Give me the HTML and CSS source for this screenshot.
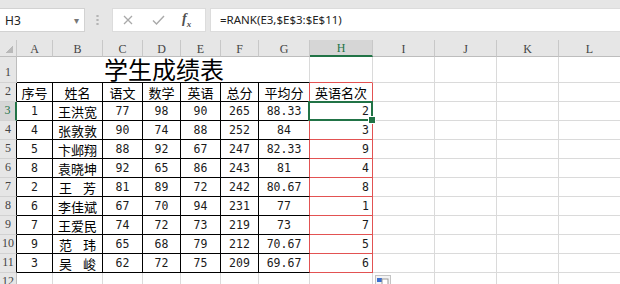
FILE: index.html
```html
<!DOCTYPE html>
<html lang="zh-CN">
<head>
    <meta charset="UTF-8" />
    <title>学生成绩表</title>
    <link rel="stylesheet" href="styles.css">
</head>
<body>
    <div class="toolbar">
        <div class="namebox"><span>H3</span><span class="drop">▾</span></div>
        <div class="grip"></div>
        <div class="fx-btns">
            <svg class="btn-x" width="10" height="10" viewBox="0 0 10 10"><path d="M1 1 L9 9 M9 1 L1 9" stroke="#a9a9a9" stroke-width="1.3" fill="none"/></svg>
            <svg class="btn-ok" width="13" height="10" viewBox="0 0 13 10"><path d="M1 5.5 L4.5 9 L12 1" stroke="#a9a9a9" stroke-width="1.4" fill="none"/></svg>
            <span class="fx"><i>f</i><sub>x</sub></span>
        </div>
        <div class="formula">=RANK(E3,$E$3:$E$11)</div>
    </div>
    <div class="sheet-wrap">
        <div class="sheet" id="sheet"></div>
        <div class="paste-opt">
            <svg width="14" height="8" viewBox="0 0 14 8"><rect x="1" y="1" width="5" height="4" fill="#3b6fd0"/><rect x="6" y="2" width="6" height="6" fill="#fff" stroke="#9a9a9a" stroke-width="1"/></svg>
        </div>
    </div>

    <script>
        const sheet = document.getElementById('sheet');
        const letters = ['A', 'B', 'C', 'D', 'E', 'F', 'G', 'H', 'I', 'J', 'K', 'L'];
        const heads = ['序号', '姓名', '语文', '数学', '英语', '总分', '平均分', '英语名次'];
        const rows = [
            ['1', '王洪宽', '77', '98', '90', '265', '88.33', '2'],
            ['4', '张敦敦', '90', '74', '88', '252', '84', '3'],
            ['5', '卞邺翔', '88', '92', '67', '247', '82.33', '9'],
            ['8', '袁晓坤', '92', '65', '86', '243', '81', '4'],
            ['2', '王 芳', '81', '89', '72', '242', '80.67', '8'],
            ['6', '李佳斌', '67', '70', '94', '231', '77', '1'],
            ['7', '王爱民', '74', '72', '73', '219', '73', '7'],
            ['9', '范 玮', '65', '68', '79', '212', '70.67', '5'],
            ['3', '吴 峻', '62', '72', '75', '209', '69.67', '6']
        ];

        function cell(cls, text) {
            const d = document.createElement('div');
            d.className = 'cell ' + cls;
            if (text) d.textContent = text;
            sheet.appendChild(d);
            return d;
        }

        function blanks(n) {
            for (let i = 0; i < n; i++) cell('');
        }

        // column headers
        cell('corner');
        letters.forEach(l => cell('ch' + (l === 'H' ? ' on' : ''), l));

        // row 1: merged title
        cell('rh', '1');
        cell('title', '学生成绩表');
        cell('rk-top');
        blanks(4);

        // row 2: table heads
        cell('rh tl', '2');
        heads.forEach((h, i) => {
            cell(i < 7 ? 'tb' + (i === 6 ? ' gr' : '') : 'rk head', h);
        });
        blanks(4);

        // rows 3-11: data
        rows.forEach((r, n) => {
            cell('rh tl' + (n === 0 ? ' on' : ''), String(n + 3));
            r.forEach((v, i) => {
                if (i === 7) {
                    cell('rk num' + (n === 0 ? ' sel' : ''), v);
                } else if (i === 1) {
                    const c = cell('tb' + (v.includes(' ') ? ' nm' : ''));
                    v.split(' ').forEach(part => {
                        const s = document.createElement('span');
                        s.textContent = part;
                        c.appendChild(s);
                    });
                } else {
                    cell('tb num' + (i === 6 ? ' gr' : ''), v);
                }
            });
            blanks(4);
        });

        // row 12 (cut by the window edge)
        cell('rh last', '12');
        blanks(12);
    </script>
</body>
</html>
```

FILE: styles.css
```css
* {
    margin: 0;
    padding: 0;
    box-sizing: border-box;
}

:root {
    --bar-bg: #e6e6e6;
    --grid-line: #dadada;
    --head-line: #c8c8c8;
    --excel-green: #217346;
    --rank-red: #e25252;
}

body {
    width: 620px;
    height: 284px;
    overflow: hidden;
    background: #fff;
    font-family: "Noto Sans CJK SC", sans-serif;
    color: #000;
}

/* formula bar */
.toolbar {
    display: flex;
    align-items: center;
    height: 40px;
    background: var(--bar-bg);
}

.namebox {
    width: 85px;
    height: 24px;
    background: #fff;
    border: 1px solid #d2d2d2;
    border-left: none;
    display: flex;
    align-items: center;
    justify-content: space-between;
    padding: 0 5px;
    font: 12px "Noto Sans", sans-serif;
    color: #222;
}

.drop {
    font-size: 10px;
    color: #777;
}

.grip {
    width: 3px;
    height: 12px;
    margin: 0 13px 0 11px;
    background: radial-gradient(circle, #b4b4b4 1px, transparent 1.3px) 0 0 / 3px 4px;
}

.fx-btns {
    width: 94px;
    height: 24px;
    background: #fff;
    border: 1px solid #dcdcdc;
    display: flex;
    align-items: center;
    padding-left: 10px;
}

.btn-ok {
    margin-left: 19px;
}

.fx {
    margin-left: 17px;
    font-family: "Liberation Serif", serif;
    font-weight: 700;
    font-size: 14px;
    color: #505050;
    line-height: 1;
}

.fx sub {
    font-size: 9px;
    font-style: italic;
}

.formula {
    flex: 1;
    height: 24px;
    margin-left: 4px;
    background: #fff;
    border: 1px solid #dcdcdc;
    border-right: none;
    padding-left: 9px;
    font: 11.5px/22px "Noto Sans", sans-serif;
    color: #222;
}

/* sheet grid */
.sheet-wrap {
    position: relative;
}

.sheet {
    display: grid;
    grid-template-columns: 17px 36px 50px 40px 38px 40px 38px 51px 63px 62px 62px 62px 62px;
    grid-template-rows: 17px 26px repeat(11, 19px);
    font-size: 13px;
}

.cell {
    display: flex;
    align-items: center;
    justify-content: center;
    border-right: 1px solid var(--grid-line);
    border-bottom: 1px solid var(--grid-line);
    white-space: nowrap;
    line-height: 1;
}

.corner {
    background:
        linear-gradient(135deg, transparent 55%, #b9b9b9 55%) right 3px bottom 3px / 8px 8px no-repeat,
        var(--bar-bg);
    border-right-color: var(--head-line);
    border-bottom-color: #bdbdbd;
}

.ch {
    background: var(--bar-bg);
    border-right-color: var(--head-line);
    border-bottom-color: #bdbdbd;
    font: 12px "Liberation Serif", serif;
    color: #444;
    padding-top: 2px;
}

.ch.on {
    background: #d6d6d6;
    color: var(--excel-green);
    border-bottom: 2px solid var(--excel-green);
}

.rh {
    background: var(--bar-bg);
    border-right-color: #bdbdbd;
    border-bottom-color: #d2d2d2;
    align-items: flex-end;
    padding-bottom: 2px;
    font: 12px "Liberation Serif", serif;
    color: #444;
}

.rh.tl {
    border-right-color: #000;
}

.rh.on {
    background: #d6d6d6;
    color: var(--excel-green);
    border-right: 2px solid var(--excel-green);
}

.rh.last {
    align-items: flex-start;
    padding: 1px 0 0;
    overflow: hidden;
}

.title {
    grid-column: span 7;
    border-bottom-color: #000;
    font-size: 24px;
    align-items: flex-end;
    padding: 0 0 1px 2px;
}

.tb {
    border-right-color: #000;
    border-bottom-color: #000;
}

.tb.gr {
    border-right-color: var(--rank-red);
}

.nm {
    justify-content: space-between;
    padding: 0 6px;
}

.num {
    font: 11.5px "DejaVu Sans Mono", monospace;
    color: #1a1a1a;
}

.rk-top {
    border-bottom-color: var(--rank-red);
}

.rk {
    border-right-color: var(--rank-red);
    border-bottom-color: var(--rank-red);
    justify-content: flex-end;
    padding-right: 3px;
}

.rk.head {
    justify-content: center;
    padding-right: 0;
}

.sel {
    position: relative;
    z-index: 1;
}

.sel::after {
    content: '';
    position: absolute;
    left: -2px;
    top: -1px;
    right: -1px;
    bottom: -1px;
    border: 2px solid var(--excel-green);
}

.sel::before {
    content: '';
    position: absolute;
    right: -4px;
    bottom: -4px;
    width: 6px;
    height: 6px;
    background: var(--excel-green);
    border: 1px solid #fff;
    z-index: 2;
}

.paste-opt {
    position: absolute;
    left: 375px;
    top: 235px;
    width: 16px;
    height: 12px;
    background: #f4f4f4;
    border: 1px solid #c4c4c4;
    padding-top: 1px;
}

.paste-opt svg {
    display: block;
}
```
